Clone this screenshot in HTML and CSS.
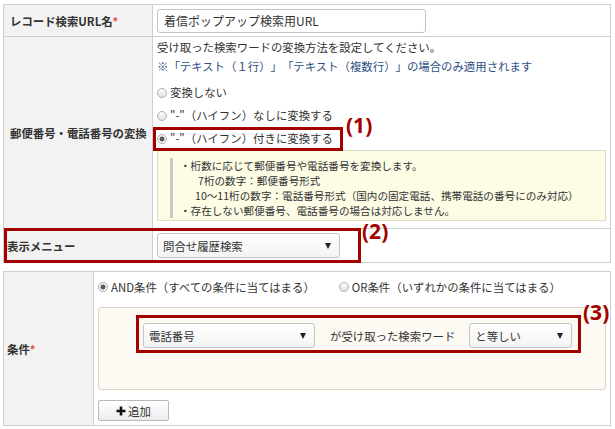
FILE: index.html
```html
<!DOCTYPE html>
<html lang="ja">
<head>
<meta charset="utf-8">
<link rel="stylesheet" href="styles.css">
</head>
<body>
<div class="page">
  <table class="form form-top">
    <colgroup><col class="c-label"><col></colgroup>
    <tr class="r-name">
      <th>レコード検索URL名<span class="req">*</span></th>
      <td><div class="input">着信ポップアップ検索用URL</div></td>
    </tr>
    <tr class="r-conv">
      <th>郵便番号・電話番号の変換</th>
      <td class="conv-cell">
        <p class="desc">受け取った検索ワードの変換方法を設定してください。</p>
        <p class="desc note-blue">※「テキスト（１行）」「テキスト（複数行）」の場合のみ適用されます</p>
        <ul class="radios">
          <li><span class="radio"></span>変換しない</li>
          <li><span class="radio"></span>"-"（ハイフン）なしに変換する</li>
          <li><span class="radio checked"></span>"-"（ハイフン）付きに変換する</li>
        </ul>
        <div class="hint">
          <div class="hint-text">
            <p>・桁数に応じて郵便番号や電話番号を変換します。</p>
            <p class="ind1">7桁の数字：郵便番号形式</p>
            <p class="ind2">10～11桁の数字：電話番号形式（国内の固定電話、携帯電話の番号にのみ対応）</p>
            <p>・存在しない郵便番号、電話番号の場合は対応しません。</p>
          </div>
        </div>
      </td>
    </tr>
    <tr class="r-menu">
      <th class="th-tight">表示メニュー</th>
      <td><div class="select sel-menu"><span>問合せ履歴検索</span><span class="arrow"></span></div></td>
    </tr>
  </table>

  <table class="form form-bottom">
    <colgroup><col class="c-label2"><col></colgroup>
    <tr>
      <th class="th-tight">条件<span class="req">*</span></th>
      <td class="cond-cell">
        <div class="cond-radios">
          <span class="opt"><span class="radio checked"></span>AND条件（すべての条件に当てはまる）</span>
          <span class="opt"><span class="radio"></span>OR条件（いずれかの条件に当てはまる）</span>
        </div>
        <div class="cond-box">
          <div class="cond-row">
            <div class="select sel-field"><span>電話番号</span><span class="arrow"></span></div>
            <span class="cond-text">が受け取った検索ワード</span>
            <div class="select sel-op"><span>と等しい</span><span class="arrow"></span></div>
          </div>
        </div>
        <button class="btn-add"><svg class="plus" width="10" height="10" viewBox="0 0 10 10"><path d="M5 0.5V9.5M0.5 5H9.5" stroke="#111" stroke-width="2.6"/></svg>追加</button>
      </td>
    </tr>
  </table>

  <div class="mark mark1"></div>
  <div class="mark-label lab1">(1)</div>
  <div class="mark mark2"></div>
  <div class="mark-label lab2">(2)</div>
  <div class="mark mark3"></div>
  <div class="mark-label lab3">(3)</div>
</div>
</body>
</html>
```

FILE: styles.css
```css
* { box-sizing: border-box; }
body {
  margin: 0;
  background: #fff;
  color: #333;
  font-family: "Noto Sans CJK JP", "Noto Sans", sans-serif;
  font-size: 11.4px;
  text-spacing-trim: space-all;
}
p, ul { margin: 0; padding: 0; }
ul { list-style: none; }

.page {
  position: relative;
  width: 615px;
  height: 429px;
  padding: 4px 5px 0 3px;
}

.form {
  border-collapse: collapse;
  table-layout: fixed;
  width: 608px;
}
.form th, .form td {
  border: 1px solid #cfcfcf;
  padding: 0 4px;
  vertical-align: middle;
}
.form th {
  background: #f2f2f2;
  text-align: left;
  font-weight: bold;
  color: #333;
  padding-left: 6px;
}
.form th.th-tight { padding-left: 3px; }
.c-label { width: 149px; }
.c-label2 { width: 90px; }

.req { color: #e0543a; }

.r-name { height: 32px; }
.r-conv { height: 192px; }
.r-menu { height: 34px; }

.input {
  width: 269px;
  height: 24px;
  border: 1px solid #c4c4c4;
  border-radius: 3px;
  padding: 0 6px;
  line-height: 22px;
  font-size: 12px;
}

.conv-cell { vertical-align: top !important; padding-top: 1px !important; padding-right: 4px !important; }
.desc { line-height: 19px; }
.note-blue { color: #2f4f86; }

.radios { margin-top: 5px; }
.radios li {
  height: 23px;
  line-height: 23px;
  display: flex;
  align-items: center;
}
.radio {
  display: inline-block;
  width: 10px;
  height: 10px;
  border: 1px solid #aeaeae;
  border-radius: 50%;
  background: linear-gradient(#fdfdfd, #e2e2e2);
  margin-right: 3px;
  flex: none;
}
.radio.checked {
  background: radial-gradient(circle, #5a5a5a 0 2.2px, #f4f4f4 2.8px);
}

.hint {
  margin-top: 0;
  background: #fdfce5;
  border: 1px solid #dedcc6;
  padding: 7px 6px 3px 12px;
  height: 71px;
}
.hint-text {
  border-left: 3px solid #c9c9c9;
  padding-left: 7px;
  font-size: 10.6px;
  line-height: 15px;
}
.hint-text .ind1 { padding-left: 18px; }
.hint-text .ind2 { padding-left: 15px; }

.select {
  display: flex;
  align-items: center;
  justify-content: space-between;
  height: 25px;
  border: 1px solid #c4c4c4;
  border-radius: 3px;
  background: linear-gradient(#ffffff, #f3f3f3);
  padding: 0 8px 0 5px;
  font-size: 11.4px;
}
.arrow {
  width: 0;
  height: 0;
  border-left: 3.5px solid transparent;
  border-right: 3.5px solid transparent;
  border-top: 6px solid #222;
}
.sel-menu { width: 183px; }

.form-bottom { margin-top: 8px; }
.form-bottom tr { height: 154px; }
.cond-cell { vertical-align: top !important; padding: 5px 4px 0 4px !important; }
.cond-radios {
  display: flex;
  height: 20px;
  align-items: center;
  gap: 24px;
}
.opt { display: flex; align-items: center; }

.cond-box {
  margin-top: 10px;
  height: 83px;
  background: #fdfaf3;
  border: 1px solid #ddd5c3;
  border-radius: 3px;
  padding: 15px 0 0 44px;
}
.cond-row { display: flex; align-items: center; }
.sel-field { width: 172px; }
.cond-text { margin: 0 14px 0 15px; }
.sel-op { width: 103px; }

.btn-add {
  margin-top: 10px;
  display: flex;
  align-items: center;
  width: 71px;
  height: 21px;
  border: 1px solid #b9b9b9;
  border-radius: 2px;
  background: linear-gradient(#ffffff, #ececec);
  font-family: inherit;
  font-size: 11.4px;
  color: #333;
  padding: 0 0 0 17px;
}
.plus { margin-right: 2px; flex: none; }

.mark {
  position: absolute;
  border: 3px solid #a30000;
}
.mark1 { left: 153px; top: 127px; width: 190px; height: 24px; }
.mark2 { left: 4px; top: 228px; width: 357px; height: 35px; }
.mark3 { left: 136px; top: 315px; width: 445px; height: 38px; }
.mark-label {
  position: absolute;
  color: #a30000;
  font-family: "Noto Sans", sans-serif;
  font-weight: bold;
  font-size: 21px;
  line-height: 1;
}
.lab1 { left: 346px; top: 115px; }
.lab2 { left: 362px; top: 221px; }
.lab3 { left: 583px; top: 302px; }
```
